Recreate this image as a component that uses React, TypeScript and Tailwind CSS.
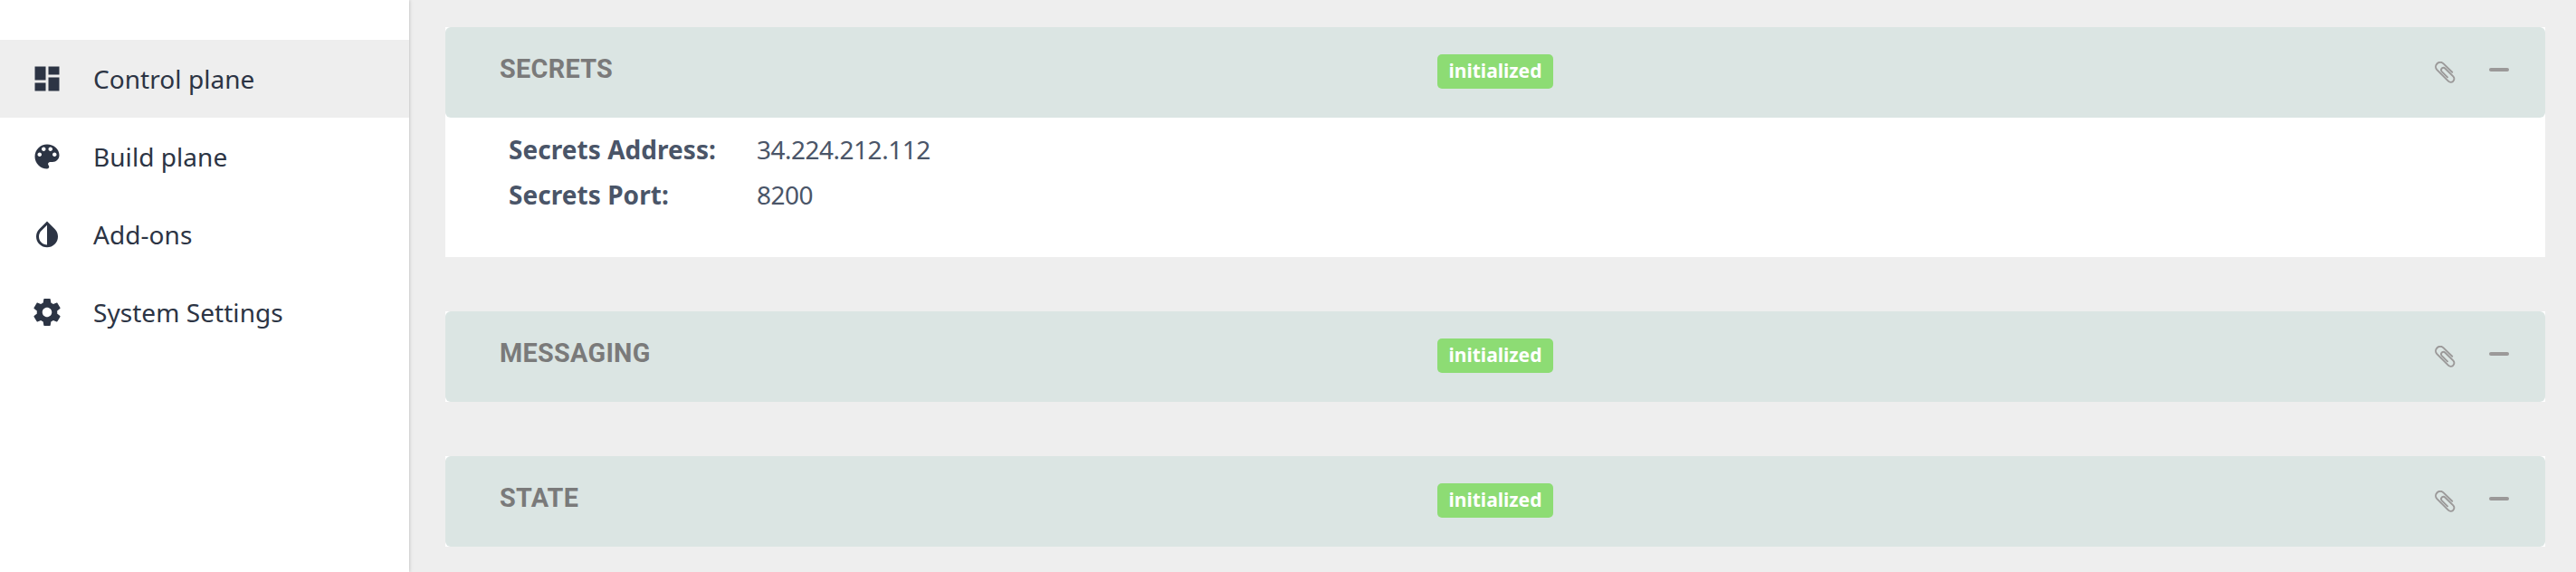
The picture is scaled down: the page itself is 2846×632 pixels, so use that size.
import React from "react";

const icons = {
  dashboard: "M3 13h8V3H3v10zm0 8h8v-6H3v6zm10 0h8V11h-8v10zm0-18v6h8V3h-8z",
  palette:
    "M12 3c-4.97 0-9 4.03-9 9s4.03 9 9 9c.83 0 1.5-.67 1.5-1.5 0-.39-.15-.74-.39-1.01-.23-.26-.38-.61-.38-.99 0-.83.67-1.5 1.5-1.5H16c2.76 0 5-2.24 5-5 0-4.42-4.03-8-9-8zm-5.5 9c-.83 0-1.5-.67-1.5-1.5S5.67 9 6.5 9 8 9.67 8 10.5 7.33 12 6.5 12zm3-4C8.67 8 8 7.33 8 6.5S8.67 5 9.5 5s1.5.67 1.5 1.5S10.33 8 9.5 8zm5 0c-.83 0-1.5-.67-1.5-1.5S13.67 5 14.5 5s1.5.67 1.5 1.5S15.33 8 14.5 8zm3 4c-.83 0-1.5-.67-1.5-1.5S16.67 9 17.5 9s1.5.67 1.5 1.5-.67 1.5-1.5 1.5z",
  drop: "M17.66 7.93L12 2.27 6.34 7.93c-3.12 3.12-3.12 8.19 0 11.31C7.9 20.8 9.95 21.58 12 21.58c2.05 0 4.1-.78 5.66-2.34 3.12-3.12 3.12-8.19 0-11.31zM12 19.59c-1.6 0-3.11-.62-4.24-1.76C6.62 16.69 6 15.19 6 13.59s.62-3.11 1.76-4.24L12 5.1v14.49z",
  settings:
    "M19.43 12.98c.04-.32.07-.64.07-.98s-.03-.66-.07-.98l2.11-1.65c.19-.15.24-.42.12-.64l-2-3.46c-.12-.22-.39-.3-.61-.22l-2.49 1c-.52-.4-1.08-.73-1.69-.98l-.38-2.65C14.46 2.18 14.25 2 14 2h-4c-.25 0-.46.18-.49.42l-.38 2.65c-.61.25-1.17.59-1.69.98l-2.49-1c-.23-.09-.49 0-.61.22l-2 3.46c-.13.22-.07.49.12.64l2.11 1.65c-.04.32-.07.65-.07.98s.03.66.07.98l-2.11 1.65c-.19.15-.24.42-.12.64l2 3.46c.12.22.39.3.61.22l2.49-1c.52.4 1.08.73 1.69.98l.38 2.65c.03.24.24.42.49.42h4c.25 0 .46-.18.49-.42l.38-2.65c.61-.25 1.17-.59 1.69-.98l2.49 1c.23.09.49 0 .61-.22l2-3.46c.12-.22.07-.49-.12-.64l-2.11-1.65zM12 15.5c-1.93 0-3.5-1.57-3.5-3.5s1.57-3.5 3.5-3.5 3.5 1.57 3.5 3.5-1.57 3.5-3.5 3.5z",
};

const navItems: { label: string; icon: string; active?: boolean }[] = [
  { label: "Control plane", icon: icons.dashboard, active: true },
  { label: "Build plane", icon: icons.palette },
  { label: "Add-ons", icon: icons.drop },
  { label: "System Settings", icon: icons.settings },
];

const panels: { title: string; rows: [string, string][] }[] = [
  {
    title: "SECRETS",
    rows: [
      ["Secrets Address:", "34.224.212.112"],
      ["Secrets Port:", "8200"],
    ],
  },
  { title: "MESSAGING", rows: [] },
  { title: "STATE", rows: [] },
];

function PaperclipIcon() {
  return (
    <svg
      className="h-6 w-[23px]"
      viewBox="0 0 23 24"
      fill="none"
      stroke="#9b9999"
      strokeWidth="1.9"
      strokeLinecap="round"
    >
      <path d="M19.2 11.8 L9.6 2.4 C7.6 .5 4.7 .4 2.6 2.3 C.5 4.3 .5 7.2 2.4 9.2 L14.9 21.6 C16.4 23.1 18.8 23.1 20.3 21.7 C21.8 20.2 21.8 17.9 20.3 16.4 L11.5 7.7 C10.4 6.6 8.8 6.6 7.8 7.5 C6.8 8.5 6.8 10 7.8 11.1 L14 17.3" />
    </svg>
  );
}

function Panel({ title, rows }: { title: string; rows: [string, string][] }) {
  return (
    <section className="bg-white">
      <header className="flex h-[100px] items-start rounded-[6px] bg-[#dbe5e3] pr-10 pl-[60px]">
        <h2 className="mt-[26px] w-[1036px] font-['Roboto',sans-serif] text-[28.8px] leading-10 font-bold tracking-[0.3px] text-[#7a7a7a]">
          {title}
        </h2>
        <span className="mt-[30px] flex h-[38px] w-32 items-center justify-center rounded-[5px] bg-[#8ddc74] pb-px text-[21px] leading-none font-bold text-white">
          initialized
        </span>
        <div className="ml-auto flex gap-[37px]">
          <div className="mt-[38px]">
            <PaperclipIcon />
          </div>
          <div className="mt-[45px] h-1 w-[22px] rounded-full bg-[#9b9999]" />
        </div>
      </header>
      {rows.length > 0 && (
        <dl className="h-[154px] pt-[10px] pl-[70px] text-[28px] leading-[50px] text-[#4a5568]">
          {rows.map(([name, value]) => (
            <div key={name} className="flex">
              <dt className="w-[274px] font-bold tracking-[0.05px]">{name}</dt>
              <dd className="tracking-[-0.5px]">{value}</dd>
            </div>
          ))}
        </dl>
      )}
    </section>
  );
}

export default function App() {
  return (
    <div className="flex h-[632px] w-[2846px] overflow-hidden bg-[#eeeeee] font-['Noto_Sans',sans-serif]">
      <nav className="z-10 w-[452px] shrink-0 bg-white pt-11 shadow-[0_0_4px_rgba(0,0,0,0.25)]">
        {navItems.map(({ label, icon, active }) => (
          <a
            key={label}
            className={
              active
                ? "flex h-[86px] items-center gap-[33px] bg-[#eeeeee] pl-[34px] text-[28px] tracking-[0.05px] text-[#2c3444]"
                : "flex h-[86px] items-center gap-[33px] pl-[34px] text-[28px] tracking-[0.05px] text-[#2c3444]"
            }
          >
            <svg className="size-9" viewBox="0 0 24 24" fill="currentColor">
              <path d={icon} />
            </svg>
            <span>{label}</span>
          </a>
        ))}
      </nav>
      <main className="flex flex-1 flex-col gap-[60px] pt-[30px] pr-[34px] pl-10">
        {panels.map((p) => (
          <Panel key={p.title} {...p} />
        ))}
      </main>
    </div>
  );
}
